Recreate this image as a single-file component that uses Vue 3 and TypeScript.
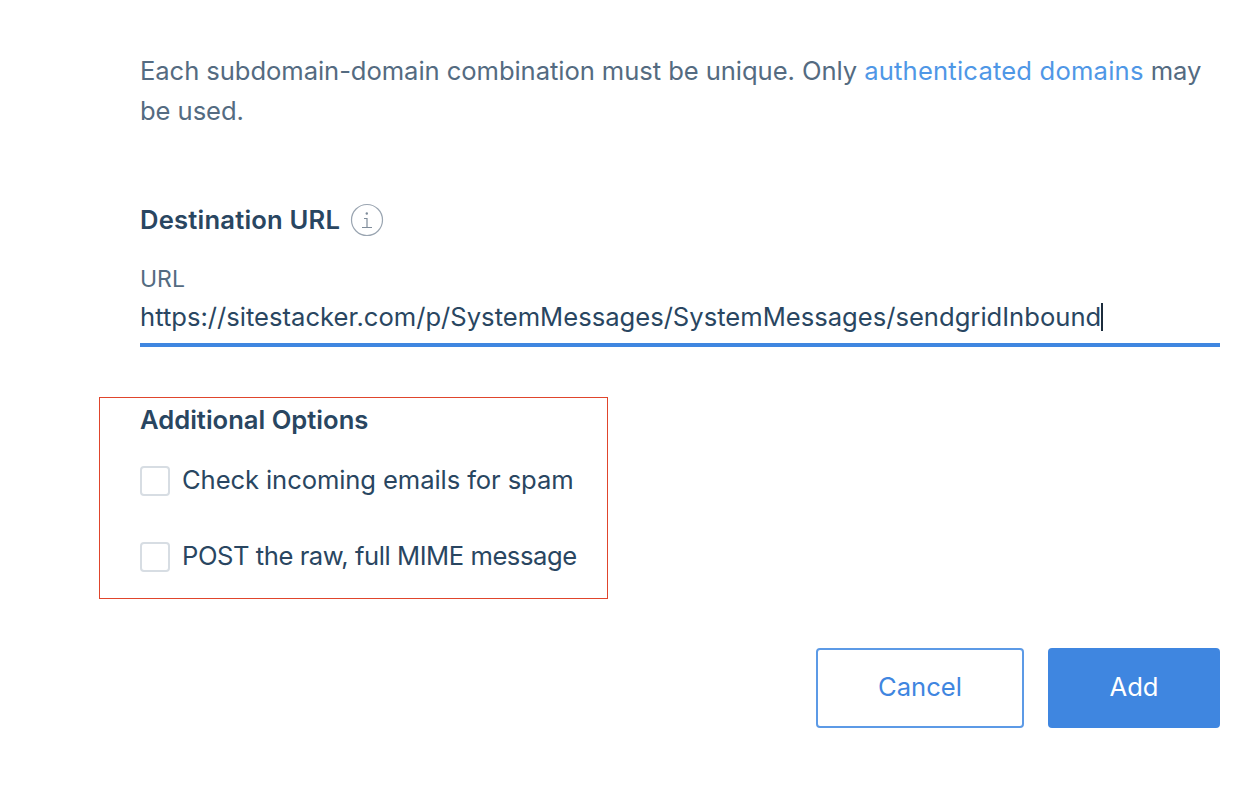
<template>
  <div class="page">
    <p class="intro">
      Each subdomain-domain combination must be unique. Only
      <a class="link">authenticated domains</a> may be used.
    </p>

    <div class="heading dest">
      <span>Destination URL</span>
      <svg class="info" width="34" height="34" viewBox="0 0 34 34" fill="none">
        <circle cx="17" cy="17" r="15.5" stroke="#9aa5b1" stroke-width="1.2" />
        <path d="M14 15.5h3v9M12 24.5h10" stroke="#7f8c9a" stroke-width="1.2" />
        <circle cx="16.8" cy="10.5" r="1.2" fill="#7f8c9a" />
      </svg>
    </div>

    <div class="field">
      <label class="field-label">URL</label>
      <div class="field-value">https://sitestacker.com/p/SystemMessages/SystemMessages/sendgridInbound<span class="caret"></span></div>
    </div>

    <div class="options">
      <div class="heading">Additional Options</div>
      <label v-for="opt in options" :key="opt" class="option">
        <span class="box"></span>
        <span>{{ opt }}</span>
      </label>
    </div>

    <div class="actions">
      <button class="btn secondary">Cancel</button>
      <button class="btn primary">Add</button>
    </div>
  </div>
</template>

<script setup lang="ts">
const options: string[] = [
  'Check incoming emails for spam',
  'POST the raw, full MIME message'
];
</script>

<style scoped>
.page {
  box-sizing: border-box;
  width: 1256px;
  height: 794px;
  padding: 51px 36px 0 140px;
  background: #fff;
  color: #294661;
  font-family: Inter, "Liberation Sans", sans-serif;
  font-size: 25.6px;
  overflow: hidden;
}

.intro {
  margin: 0;
  width: 1070px;
  line-height: 40px;
  letter-spacing: -0.07px;
  color: #546b81;
}

.link {
  color: #4f97e6;
  letter-spacing: 0.19px;
}

.heading {
  font-weight: 600;
  line-height: 34px;
}

.dest {
  display: flex;
  align-items: center;
  gap: 10px;
  margin-top: 72px;
  letter-spacing: 0.2px;
}

.field {
  margin-top: 27px;
  height: 83px;
  width: 1080px;
  box-sizing: border-box;
  border-bottom: 4px solid #3f86e0;
}

.field-label {
  display: block;
  font-size: 23px;
  line-height: 30px;
  margin-bottom: 4px;
  color: #546b81;
}

.field-value {
  display: flex;
  align-items: center;
  line-height: 38px;
  white-space: nowrap;
}

.caret {
  width: 2px;
  height: 28px;
  background: #1c2c3c;
}

.options {
  position: relative;
  margin-top: 50px;
  width: 509px;
  height: 202px;
  margin-left: -41px;
  padding: 5px 0 0 40px;
  box-sizing: border-box;
  border: 1px solid #e0452c;
}

.heading + .option {
  margin-top: 4px;
  letter-spacing: -0.1px;
}

.option {
  display: flex;
  align-items: center;
  gap: 12px;
  height: 76px;
  letter-spacing: -0.45px;
}

.box {
  width: 30px;
  height: 30px;
  margin-top: 4px;
  box-sizing: border-box;
  border: 2px solid #d7dde3;
  border-radius: 4px;
}

.actions {
  display: flex;
  justify-content: flex-end;
  gap: 24px;
  margin-top: 49px;
}

.btn {
  height: 80px;
  border-radius: 4px;
  font: inherit;
  padding: 0 0 4px;
}

.secondary {
  width: 208px;
  background: #fff;
  color: #3f86e0;
  border: 2px solid #5c9ae6;
}

.primary {
  width: 172px;
  background: #3f86e0;
  color: #fff;
  border: none;
}
</style>
